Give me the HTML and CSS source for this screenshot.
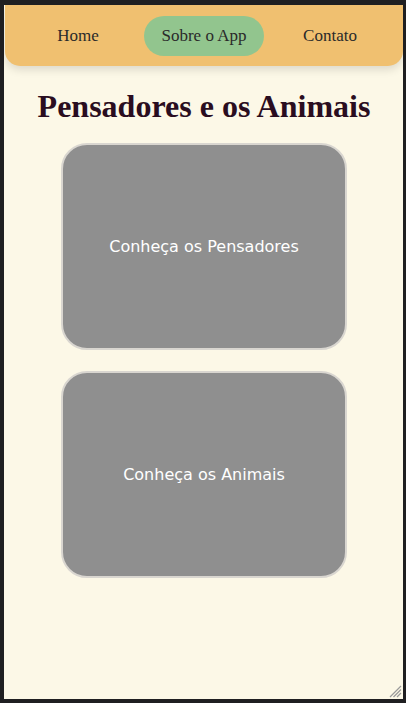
FILE: index.html
```html
<!DOCTYPE html>
<html lang="pt">
<head>
<meta charset="utf-8">
<title>Pensadores e os Animais</title>
<link rel="stylesheet" href="styles.css">
</head>
<body>
<div class="frame">
  <nav class="nav">
    <a class="nav-item" href="#">Home</a>
    <a class="nav-item active" href="#">Sobre o App</a>
    <a class="nav-item" href="#">Contato</a>
  </nav>
  <main class="main">
    <h1 class="title">Pensadores e os Animais</h1>
    <a class="card" href="#">Conheça os Pensadores</a>
    <a class="card" href="#">Conheça os Animais</a>
  </main>
  <svg class="grip" width="13" height="13" viewBox="0 0 13 13">
    <path d="M12 1L1 12M12 4.5L4.5 12M12 8L8 12" stroke="#9a9a9a" stroke-width="1.2"/>
  </svg>
</div>
</body>
</html>
```
FILE: styles.css
```css
html, body {
  margin: 0;
  padding: 0;
  background: #1f1f21;
}
.frame {
  position: relative;
  box-sizing: border-box;
  width: 406px;
  height: 703px;
  border-style: solid;
  border-color: #1f1f21;
  border-width: 5px 3px 4px 4px;
  background: #fcf8e7;
  overflow: hidden;
}
.nav {
  display: flex;
  justify-content: center;
  align-items: center;
  height: 61px;
  margin-left: 1px;
  background: #f0c070;
  border-radius: 0 0 15px 15px;
  box-shadow: 0 4px 8px rgba(0, 0, 0, 0.12);
}
.nav-item {
  width: 120px;
  height: 40px;
  margin: 0 3px;
  display: flex;
  align-items: center;
  justify-content: center;
  border-radius: 20px;
  font-family: "Liberation Serif", serif;
  font-size: 17px;
  color: #2a2a2a;
  text-decoration: none;
}
.nav-item.active {
  background: #92c58e;
}
.main {
  display: flex;
  flex-direction: column;
  align-items: center;
  gap: 21px;
}
.title {
  margin: 24px 0 0 1px;
  font-family: "Liberation Serif", serif;
  font-weight: bold;
  font-size: 32px;
  line-height: 32px;
  color: #2a0d20;
}
.card {
  box-sizing: border-box;
  width: 286px;
  height: 207px;
  margin-left: 1px;
  display: flex;
  align-items: center;
  justify-content: center;
  background: #8f8f8f;
  border: 2px solid #d9d6d0;
  border-radius: 26px;
  font-family: "DejaVu Sans", sans-serif;
  font-size: 16px;
  color: #ffffff;
  text-decoration: none;
}
.grip {
  position: absolute;
  right: 1px;
  bottom: 1px;
}
```
